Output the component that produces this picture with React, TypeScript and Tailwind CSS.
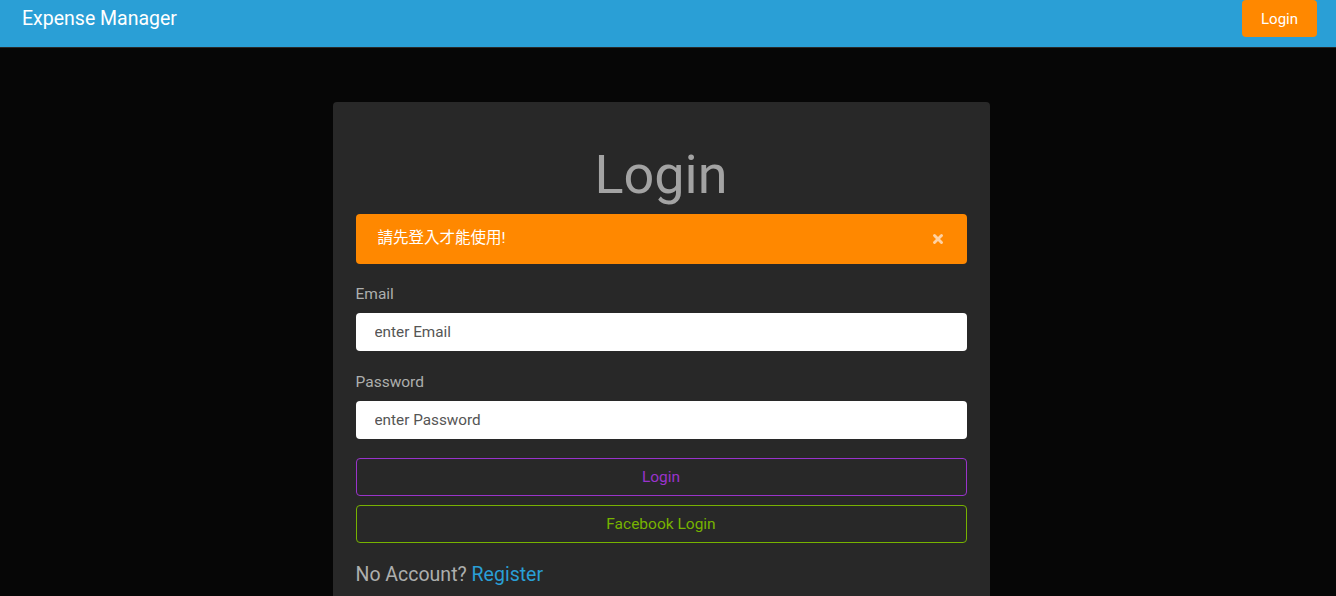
import { X } from "lucide-react";

export default function App() {
  return (
    <div className="min-h-screen bg-[#060606] font-['Roboto',sans-serif] text-[#adafae]">
      <nav className="flex h-[48px] items-start justify-between border-b border-[#282828] bg-[#2a9fd6] pl-[22px] pr-[19px]">
        <span className="mt-[7px] text-[19.5px] leading-[24px] text-white">Expense Manager</span>
        <button className="h-[37px] w-[75px] rounded-[4px] bg-[#ff8800] pt-[1px] text-[15px] text-white">
          Login
        </button>
      </nav>

      <div className="flex w-[1322px] justify-center pt-[54px]">
        <div className="w-[657px] rounded-[4px] bg-[#282828] px-[23px] pt-[40px] pb-[20px]">
          <h1 className="text-center text-[54px] leading-[66px] font-normal text-[#a3a3a3]">Login</h1>

          <div className="mt-[6px] flex h-[50px] items-center justify-between rounded-[4px] bg-[#ff8800] pl-[22px] pr-[22px] font-['Roboto','Noto_Sans_CJK_TC',sans-serif] text-[15.5px] text-white">
            <span>請先登入才能使用!</span>
            <X className="h-[14px] w-[14px] text-[#ffd2a3]" strokeWidth={5} />
          </div>

          <label className="mt-[21px] block text-[15.5px] leading-[18px]">Email</label>
          <input
            className="mt-[10px] block h-[38px] w-full rounded-[4px] bg-white px-[19px] text-[15.3px] text-[#555] placeholder:text-[#555] outline-none"
            placeholder="enter Email"
          />

          <label className="mt-[22px] block text-[15.5px] leading-[18px]">Password</label>
          <input
            type="password"
            className="mt-[10px] block h-[38px] w-full rounded-[4px] bg-white px-[19px] text-[15.3px] text-[#555] placeholder:text-[#555] outline-none"
            placeholder="enter Password"
          />

          <button className="mt-[19px] block h-[38px] w-full rounded-[4px] border border-[#9933cc] pt-[1px] text-[15.5px] text-[#9933cc]">
            Login
          </button>
          <button className="mt-[9px] block h-[38px] w-full rounded-[4px] border border-[#77b300] pt-[1px] text-[15.5px] text-[#77b300]">
            Facebook Login
          </button>

          <p className="mt-[20px] text-[19.5px] leading-[24px]">
            No Account? <a className="text-[#2a9fd6]">Register</a>
          </p>
        </div>
      </div>
    </div>
  );
}
